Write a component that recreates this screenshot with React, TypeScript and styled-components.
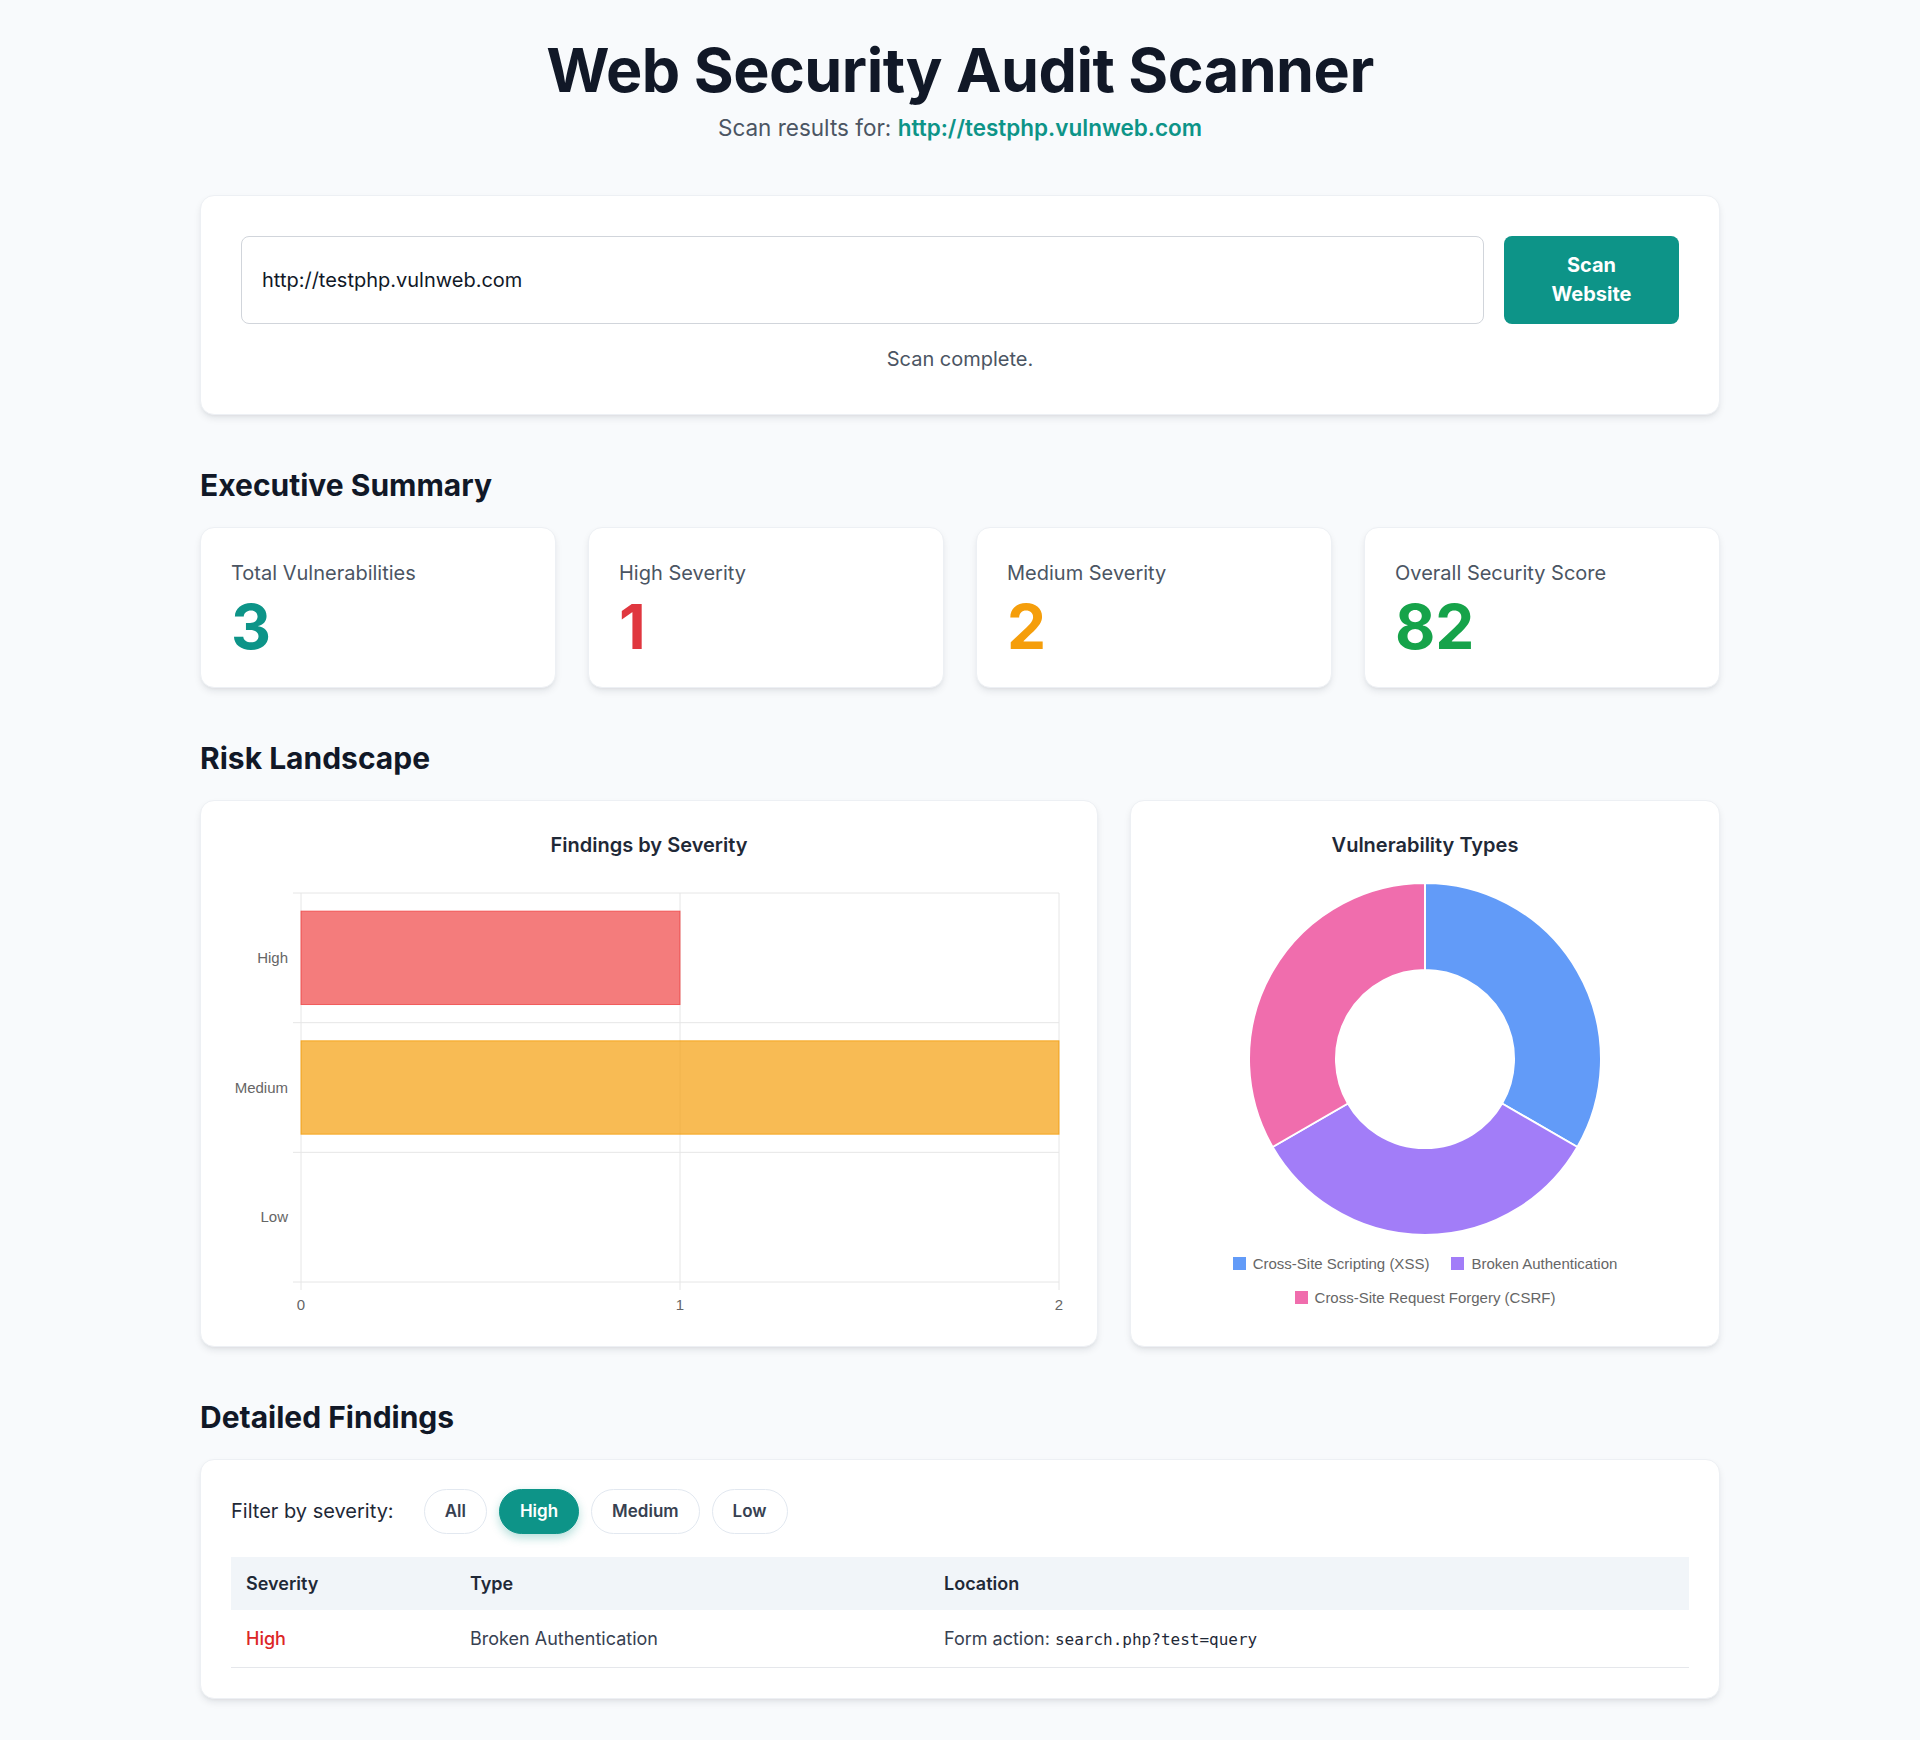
import React from "react";
import styled, { createGlobalStyle } from "styled-components";

const GlobalStyle = createGlobalStyle`
  * {
    box-sizing: border-box;
  }

  body {
    margin: 0;
    background: #f8fafc;
    font-family: Inter, "Noto Sans", sans-serif;
    color: #111827;
  }
`;

const Page = styled.div`
  width: 1520px;
  margin: 0 auto;
  padding: 34px 0 40px;
`;

const Header = styled.header`
  text-align: center;
  margin-bottom: 50px;
`;

const Title = styled.h1`
  margin: 0;
  font-size: 61px;
  line-height: 1.2;
  font-weight: 700;
  letter-spacing: -0.5px;
  color: #111827;
`;

const Subtitle = styled.p`
  margin: 4px 0 0;
  font-size: 22.5px;
  line-height: 1.5;
  color: #4b5563;

  a {
    color: #0d9488;
    font-weight: 600;
    text-decoration: none;
  }
`;

const Card = styled.div`
  background: #ffffff;
  border: 1px solid #edf0f4;
  border-radius: 14px;
  box-shadow: 0 4px 8px -2px rgba(15, 23, 42, 0.12), 0 2px 4px -2px rgba(15, 23, 42, 0.06);
`;

const ScanCard = styled(Card)`
  padding: 40px;
`;

const ScanRow = styled.div`
  display: flex;
  gap: 20px;
  align-items: stretch;
`;

const UrlInput = styled.input`
  flex: 1;
  padding: 0 20px;
  border: 1px solid #d1d5db;
  border-radius: 8px;
  font-family: Inter, sans-serif;
  font-size: 20px;
  color: #111827;
  background: #fff;
  outline: none;
`;

const ScanButton = styled.button`
  width: 175px;
  padding: 15px 36px;
  border: none;
  border-radius: 8px;
  background: #0d9488;
  color: #ffffff;
  font-family: Inter, sans-serif;
  font-size: 20px;
  font-weight: 700;
  line-height: 1.45;
  cursor: pointer;
`;

const Status = styled.p`
  margin: 20px 0 0;
  text-align: center;
  font-size: 20px;
  line-height: 1.5;
  color: #4b5563;
`;

const Section = styled.section`
  margin-top: 52px;
`;

const SectionTitle = styled.h2`
  margin: 0 0 24px;
  font-size: 30px;
  line-height: 1.2;
  font-weight: 700;
  color: #111827;
`;

const SummaryGrid = styled.div`
  display: grid;
  grid-template-columns: repeat(4, 1fr);
  gap: 32px;
`;

const StatCard = styled(Card)`
  height: 161px;
  padding: 30px;
`;

const StatLabel = styled.div`
  font-size: 20px;
  line-height: 1.5;
  color: #4b5563;
`;

const StatValue = styled.div<{ $color: string }>`
  margin-top: 5px;
  font-size: 62px;
  line-height: 1.1;
  font-weight: 700;
  color: ${(p) => p.$color};
`;

const ChartsGrid = styled.div`
  display: grid;
  grid-template-columns: 898px 1fr;
  gap: 32px;
`;

const ChartCard = styled(Card)`
  height: 547px;
  padding: 30px;
`;

const ChartTitle = styled.h3`
  margin: 0 0 12px;
  text-align: center;
  font-size: 20px;
  line-height: 28px;
  font-weight: 600;
  color: #1f2937;
`;

const ChartSvg = styled.svg`
  display: block;
  width: 100%;
  font-family: "Liberation Sans", Arial, sans-serif;
`;

const Legend = styled.div`
  display: flex;
  flex-wrap: wrap;
  justify-content: center;
  max-width: 440px;
  margin: 6px auto 0;
  column-gap: 22px;
  font-family: "Liberation Sans", Arial, sans-serif;
  font-size: 15px;
  color: #666666;
`;

const LegendItem = styled.div`
  display: flex;
  align-items: center;
  gap: 7px;
  height: 34px;
`;

const Swatch = styled.span<{ $color: string }>`
  width: 13px;
  height: 13px;
  background: ${(p) => p.$color};
`;

const FindingsCard = styled(Card)`
  padding: 29px 30px 30px;
`;

const FilterRow = styled.div`
  display: flex;
  align-items: center;
  gap: 12px;
`;

const FilterLabel = styled.span`
  margin-right: 18px;
  font-size: 20px;
  color: #1f2937;
`;

const Pill = styled.button<{ $active?: boolean }>`
  height: 45px;
  padding: 0 20px;
  border-radius: 999px;
  border: 1px solid ${(p) => (p.$active ? "#0d9488" : "#e2e8f0")};
  background: ${(p) => (p.$active ? "#0d9488" : "#ffffff")};
  color: ${(p) => (p.$active ? "#ffffff" : "#374151")};
  box-shadow: ${(p) => (p.$active ? "0 4px 10px rgba(13, 148, 136, 0.3)" : "none")};
  font-family: Inter, sans-serif;
  font-size: 17px;
  font-weight: 600;
  cursor: pointer;
`;

const Table = styled.table`
  width: 100%;
  margin-top: 23px;
  border-collapse: collapse;
  table-layout: fixed;
  font-size: 18px;
  line-height: 1.5;

  th {
    background: #f1f5f9;
    text-align: left;
    padding: 13px 15px;
    font-weight: 600;
    color: #1f2937;
  }

  th:nth-child(1) {
    width: 224px;
  }

  th:nth-child(2) {
    width: 474px;
  }

  td {
    padding: 15px;
    border-bottom: 1px solid #e5e7eb;
    color: #374151;
  }
`;

const SeverityText = styled.span`
  color: #dc2626;
  font-weight: 500;
`;

const Code = styled.code`
  font-family: "DejaVu Sans Mono", "Liberation Mono", monospace;
  font-size: 16px;
  color: #1f2937;
`;

const stats = [
  { label: "Total Vulnerabilities", value: "3", color: "#0d9488" },
  { label: "High Severity", value: "1", color: "#e0373f" },
  { label: "Medium Severity", value: "2", color: "#f59e0b" },
  { label: "Overall Security Score", value: "82", color: "#16a34a" },
];

const slices = [
  { label: "Cross-Site Scripting (XSS)", color: "rgba(59,130,246,0.8)" },
  { label: "Broken Authentication", color: "rgba(139,92,246,0.8)" },
  { label: "Cross-Site Request Forgery (CSRF)", color: "rgba(236,72,153,0.8)" },
];

function arcPath(cx: number, cy: number, R: number, r: number, a0: number, a1: number) {
  const pt = (rad: number, a: number) => [
    cx + rad * Math.sin((a * Math.PI) / 180),
    cy - rad * Math.cos((a * Math.PI) / 180),
  ];
  const [x0, y0] = pt(R, a0);
  const [x1, y1] = pt(R, a1);
  const [x2, y2] = pt(r, a1);
  const [x3, y3] = pt(r, a0);
  const large = a1 - a0 > 180 ? 1 : 0;
  return `M${x0} ${y0} A${R} ${R} 0 ${large} 1 ${x1} ${y1} L${x2} ${y2} A${r} ${r} 0 ${large} 0 ${x3} ${y3} Z`;
}

function SeverityChart() {
  const left = 70;
  const right = 828;
  const top = 22;
  const bottom = 411;
  const band = (bottom - top) / 3;
  const xFor = (v: number) => left + ((right - left) * v) / 2;
  const bars = [
    { label: "High", value: 1, fill: "rgba(239,68,68,0.7)", stroke: "rgba(239,68,68,0.8)" },
    { label: "Medium", value: 2, fill: "rgba(245,158,11,0.7)", stroke: "rgba(245,158,11,0.8)" },
    { label: "Low", value: 0, fill: "rgba(34,197,94,0.7)", stroke: "rgba(34,197,94,0.8)" },
  ];
  const grid = "#e6e6e6";

  return (
    <ChartSvg viewBox="0 0 836 447" height={447}>
      {[0, 1, 2, 3].map((i) => (
        <line key={"h" + i} x1={left - 8} x2={right} y1={top + band * i} y2={top + band * i} stroke={grid} />
      ))}
      {[0, 1, 2].map((v) => (
        <line key={"v" + v} x1={xFor(v)} x2={xFor(v)} y1={top} y2={bottom + 8} stroke={grid} />
      ))}
      {bars.map((b, i) => {
        const h = band * 0.72;
        const y = top + band * i + (band - h) / 2;
        return (
          <g key={b.label}>
            {b.value > 0 && (
              <rect
                x={left}
                y={y}
                width={xFor(b.value) - left}
                height={h}
                fill={b.fill}
                stroke={b.stroke}
                strokeWidth={1}
              />
            )}
            <text x={left - 13} y={top + band * i + band / 2 + 5} textAnchor="end" fontSize={15} fill="#666">
              {b.label}
            </text>
          </g>
        );
      })}
      {[0, 1, 2].map((v) => (
        <text key={"t" + v} x={xFor(v)} y={bottom + 28} textAnchor="middle" fontSize={15} fill="#666">
          {v}
        </text>
      ))}
    </ChartSvg>
  );
}

function TypesChart() {
  const cx = 264;
  const cy = 188;
  return (
    <>
      <ChartSvg viewBox="0 0 528 370" height={370}>
        {slices.map((s, i) => (
          <path
            key={s.label}
            d={arcPath(cx, cy, 176, 89, i * 120, (i + 1) * 120)}
            fill={s.color}
            stroke="#ffffff"
            strokeWidth={2}
          />
        ))}
      </ChartSvg>
      <Legend>
        {slices.map((s) => (
          <LegendItem key={s.label}>
            <Swatch $color={s.color} />
            {s.label}
          </LegendItem>
        ))}
      </Legend>
    </>
  );
}

export default function App() {
  return (
    <>
      <GlobalStyle />
      <Page>
        <Header>
          <Title>Web Security Audit Scanner</Title>
          <Subtitle>
            Scan results for: <a href="#">http://testphp.vulnweb.com</a>
          </Subtitle>
        </Header>

        <ScanCard>
          <ScanRow>
            <UrlInput defaultValue="http://testphp.vulnweb.com" />
            <ScanButton>Scan Website</ScanButton>
          </ScanRow>
          <Status>Scan complete.</Status>
        </ScanCard>

        <Section>
          <SectionTitle>Executive Summary</SectionTitle>
          <SummaryGrid>
            {stats.map((s) => (
              <StatCard key={s.label}>
                <StatLabel>{s.label}</StatLabel>
                <StatValue $color={s.color}>{s.value}</StatValue>
              </StatCard>
            ))}
          </SummaryGrid>
        </Section>

        <Section>
          <SectionTitle>Risk Landscape</SectionTitle>
          <ChartsGrid>
            <ChartCard>
              <ChartTitle>Findings by Severity</ChartTitle>
              <SeverityChart />
            </ChartCard>
            <ChartCard>
              <ChartTitle>Vulnerability Types</ChartTitle>
              <TypesChart />
            </ChartCard>
          </ChartsGrid>
        </Section>

        <Section>
          <SectionTitle>Detailed Findings</SectionTitle>
          <FindingsCard>
            <FilterRow>
              <FilterLabel>Filter by severity:</FilterLabel>
              <Pill>All</Pill>
              <Pill $active>High</Pill>
              <Pill>Medium</Pill>
              <Pill>Low</Pill>
            </FilterRow>
            <Table>
              <thead>
                <tr>
                  <th>Severity</th>
                  <th>Type</th>
                  <th>Location</th>
                </tr>
              </thead>
              <tbody>
                <tr>
                  <td>
                    <SeverityText>High</SeverityText>
                  </td>
                  <td>Broken Authentication</td>
                  <td>
                    Form action: <Code>search.php?test=query</Code>
                  </td>
                </tr>
              </tbody>
            </Table>
          </FindingsCard>
        </Section>
      </Page>
    </>
  );
}
